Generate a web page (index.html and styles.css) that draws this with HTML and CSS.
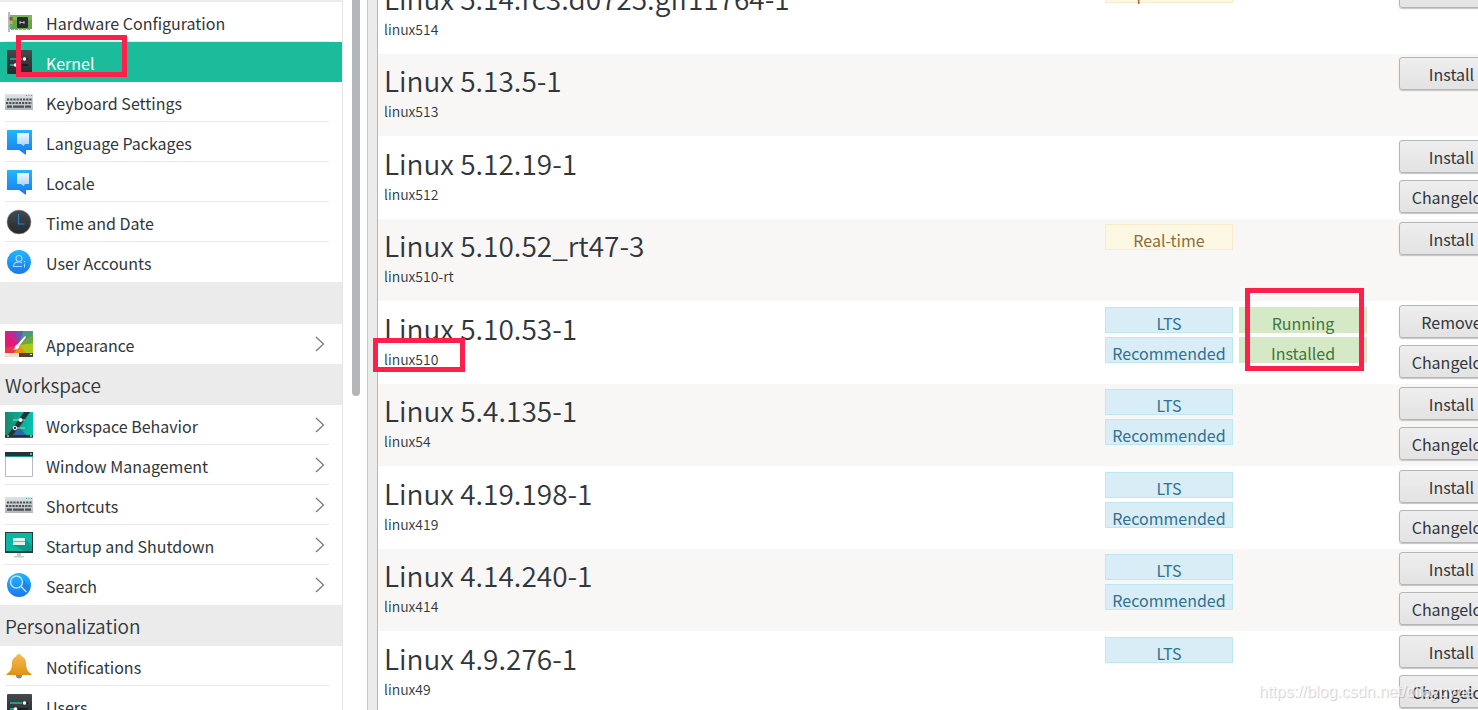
FILE: index.html
```html
<!DOCTYPE html>
<html lang="en">
<head>
  <meta charset="UTF-8">
  <meta name="viewport" content="width=device-width, initial-scale=1.0">
  <title>Kernel - Settings Manager</title>
  <link rel="stylesheet" href="styles.css">
</head>
<body>
  <!-- shared icons -->
  <svg class="defs" width="0" height="0">
    <defs>
      <linearGradient id="blue" x1="0" y1="0" x2="0" y2="1"><stop offset="0" stop-color="#1fb8fb"/><stop offset="1" stop-color="#1d77ef"/></linearGradient>
      <linearGradient id="dark" x1="0" y1="0" x2="0" y2="1"><stop offset="0" stop-color="#454a4e"/><stop offset="1" stop-color="#26292c"/></linearGradient>
      <linearGradient id="gold" x1="0" y1="0" x2="0" y2="1"><stop offset="0" stop-color="#f4bd54"/><stop offset="1" stop-color="#e29210"/></linearGradient>
      <linearGradient id="teal" x1="0" y1="0" x2="1" y2="0"><stop offset="0" stop-color="#168a6c"/><stop offset="1" stop-color="#05c3b2"/></linearGradient>
      <linearGradient id="pale" x1="0" y1="0" x2="0" y2="1"><stop offset="0" stop-color="#eef8ff"/><stop offset="1" stop-color="#a9d2fb"/></linearGradient>
      <linearGradient id="case" x1="0" y1="0" x2="0" y2="1"><stop offset="0" stop-color="#dfe3e5"/><stop offset="1" stop-color="#b3b9bd"/></linearGradient>
    </defs>
    <symbol id="sliders" viewBox="0 0 28 28">
      <rect x="2" y="2" width="25" height="24" rx="1" fill="url(#dark)"/>
      <path d="M5 11h12M5 17h6" stroke="#1abc9c" stroke-width="1.5"/>
      <path d="M17 11h6M11 17h12" stroke="#15181a" stroke-width="1.5"/>
      <circle cx="19.500" cy="11" r="1.800" fill="#fff"/><circle cx="10.500" cy="17" r="1.800" fill="#fff"/>
    </symbol>
    <symbol id="keyboard" viewBox="0 0 28 28">
      <rect x="0" y="6" width="28" height="16" fill="url(#case)"/>
      <path d="M21 7.500h6" stroke="#1abc9c" stroke-dasharray="1 1.500"/>
      <path d="M2 11.500h25M1 15h26" stroke="#4a5156" stroke-width="2.200" stroke-dasharray="2.200 1"/>
      <path d="M2 18.700h5M8 18.700h11M20 18.700h6" stroke="#4a5156" stroke-width="2.200"/>
    </symbol>
    <symbol id="bubble" viewBox="0 0 28 28">
      <path d="M2 2h25v20h-6v5l-7-5H2z" fill="url(#blue)"/>
      <path d="M12 5h12v11h-4l-1.500 2-2.500-2h-4z" fill="url(#pale)"/>
    </symbol>
    <symbol id="chevron" viewBox="0 0 10 16">
      <path d="M1 1l7.500 7L1 15" fill="none" stroke="#777b7e" stroke-width="1.300"/>
    </symbol>
  </svg>

  <div class="window">
    <nav class="sidebar">
      <ul class="group">
        <li><a class="item" href="#">
          <svg class="icon" viewBox="0 0 28 28">
            <rect x="4" y="7" width="23" height="14" fill="#68a347"/><rect x="4" y="7" width="23" height="5" fill="#7db65a"/>
            <rect x="3" y="4" width="2" height="20" fill="#b7bbbd"/>
            <path d="M6 9v3" stroke="#e5266d" stroke-width="3"/><path d="M6 13v3" stroke="#f2a71b" stroke-width="3"/><path d="M6 17v2" stroke="#2fb6e2" stroke-width="3"/>
            <rect x="12" y="9" width="11" height="11" rx="1" fill="#272c2f"/><path d="M15 13v3M15 14.500h4M19 13v3" stroke="#b8bfc2" fill="none"/>
            <path d="M6 21.500h19" stroke="#cda448" stroke-dasharray="3 1"/>
          </svg>
          <span class="label">Hardware Configuration</span></a></li>
        <li><a class="item active" href="#" aria-current="page"><svg class="icon"><use href="#sliders"/></svg><span class="label">Kernel</span></a></li>
        <li><a class="item" href="#"><svg class="icon"><use href="#keyboard"/></svg><span class="label">Keyboard Settings</span></a></li>
        <li><a class="item" href="#"><svg class="icon"><use href="#bubble"/></svg><span class="label">Language Packages</span></a></li>
        <li><a class="item" href="#"><svg class="icon"><use href="#bubble"/></svg><span class="label">Locale</span></a></li>
        <li><a class="item" href="#">
          <svg class="icon" viewBox="0 0 28 28"><circle cx="14" cy="14" r="12" fill="url(#dark)" stroke="#94979a" stroke-width=".6"/><path d="M13.500 6v10h6" fill="none" stroke="#2184c9" stroke-width="1.200"/></svg>
          <span class="label">Time and Date</span></a></li>
        <li><a class="item" href="#">
          <svg class="icon" viewBox="0 0 28 28"><circle cx="14" cy="14" r="12" fill="url(#blue)"/><g fill="none" stroke="#a5d8fc" stroke-width="1.100"><circle cx="14" cy="10.500" r="3"/><path d="M17 18.500H8.500c0-3 2-4.500 5.500-4.500 1.500 0 2.500.4 3 1"/><path d="M19.500 13v1.200M19.500 15.500v4"/></g></svg>
          <span class="label">User Accounts</span></a></li>
      </ul>

      <div class="spacer"></div>
      <ul class="group">
        <li><a class="item" href="#">
          <svg class="icon" viewBox="0 0 28 28">
            <rect y="1" width="28" height="26" fill="#e8452f"/>
            <path d="M14 15L0 1v17z" fill="#e6157f"/><path d="M14 15L0 1h10z" fill="#b92a9b"/><path d="M14 15L10 1h8z" fill="#6a54b4"/>
            <path d="M14 15L18 1h10v3z" fill="#4c9884"/><path d="M14 15L28 4v9z" fill="#66ad3d"/><path d="M14 15L28 13v10H18z" fill="#a9c916"/>
            <path d="M14 15L0 18v5h12z" fill="#ed3545"/><path d="M14 15l-5 8h12z" fill="#ee8b18"/>
            <path d="M0 23h14v4H0z" fill="#f7dccb"/><path d="M14 23h14v4H14z" fill="#4c4529"/><path d="M2 24.500h2M25 24.500h2" stroke="#fff"/>
            <path d="M20 6L12 15l2 1 7-8.500z" fill="#fff"/><path d="M12 14.500c-3 1-1 4-4 5 4 .5 6-1 6.500-3.500z" fill="#fff"/>
          </svg>
          <span class="label">Appearance</span><svg class="arrow"><use href="#chevron"/></svg></a></li>
      </ul>

      <h2 class="heading">Workspace</h2>
      <ul class="group">
        <li><a class="item" href="#">
          <svg class="icon" viewBox="0 0 28 28">
            <rect y="1" width="28" height="26" fill="url(#teal)"/>
            <path d="M19 1h6L8 25H2z" fill="#263136"/><path d="M8 24l6-8 7 8z" fill="#2868a5"/>
            <path d="M0 24h28v2.500H0z" fill="#26313a"/><path d="M2 25h2M25 25h2" stroke="#fff"/>
            <path d="M8 9h12M8 17h12" stroke="#9fd9d0"/><circle cx="15.500" cy="9" r="2" fill="#fff"/><circle cx="10" cy="17" r="1.800" fill="#334" stroke="#fff"/>
          </svg>
          <span class="label">Workspace Behavior</span><svg class="arrow"><use href="#chevron"/></svg></a></li>
        <li><a class="item" href="#">
          <svg class="icon" viewBox="0 0 28 28"><path d="M.5 3v22.500h27V3" fill="#fff" stroke="#b6bbbf"/><path d="M0 1h28v4H0z" fill="#263238"/><path d="M0 5.500h28" stroke="#1f9d86"/><path d="M25 3h2" stroke="#fff"/></svg>
          <span class="label">Window Management</span><svg class="arrow"><use href="#chevron"/></svg></a></li>
        <li><a class="item" href="#"><svg class="icon"><use href="#keyboard"/></svg><span class="label">Shortcuts</span><svg class="arrow"><use href="#chevron"/></svg></a></li>
        <li><a class="item" href="#">
          <svg class="icon" viewBox="0 0 28 28"><path d="M0 1h28v21H0z" fill="#263a40"/><path d="M1 2h26v18H1z" fill="#08b8a2"/><path d="M20 8l7 7v5h-8l-11-6z" fill="#079a89"/><path d="M8 7h12v7H8z" fill="#dff1ef"/><path d="M8 10.500h12" stroke="#76bcb4"/><path d="M12 22h4v3h3v1.500H9V25h3z" fill="#c8cccf"/></svg>
          <span class="label">Startup and Shutdown</span><svg class="arrow"><use href="#chevron"/></svg></a></li>
        <li><a class="item" href="#">
          <svg class="icon" viewBox="0 0 28 28"><circle cx="14" cy="14" r="12" fill="url(#blue)"/><path d="M17 7l8 9-4 7-5-6z" fill="#1d6fe3" opacity=".5"/><circle cx="11.500" cy="11" r="6" fill="none" stroke="#b5e2fd" stroke-width="1.500"/><path d="M16 15.500l5.500 5.500" stroke="#b5e2fd" stroke-width="1.500"/></svg>
          <span class="label">Search</span><svg class="arrow"><use href="#chevron"/></svg></a></li>
      </ul>

      <h2 class="heading">Personalization</h2>
      <ul class="group">
        <li><a class="item" href="#">
          <svg class="icon" viewBox="0 0 28 28"><circle cx="14" cy="23.500" r="3" fill="#878a8d"/><path d="M14 2c1.500 0 2.500 1 2.700 2.300C20 5.500 21 8 21 11c0 6 2 9 5.500 11v1h-25v-1C5 20 7 17 7 11c0-3 1-5.500 4.300-6.700C11.500 3 12.500 2 14 2z" fill="url(#gold)"/></svg>
          <span class="label">Notifications</span></a></li>
        <li><a class="item" href="#"><svg class="icon"><use href="#sliders"/></svg><span class="label">Users</span></a></li>
      </ul>
    </nav>
    <div class="scroll"><div class="thumb"></div></div>
    <div class="splitter"></div>

    <main class="content">
      <ul class="kernels">
        <li class="kernel">
          <div class="info"><h3>Linux 5.14.rc3.d0725.gff11764-1</h3><p>linux514</p></div>
          <div class="badges"><span class="badge warn">Experimental</span></div>
          <div class="badges"></div>
          <div class="buttons"><button>Install</button></div>
        </li>
        <li class="kernel">
          <div class="info"><h3>Linux 5.13.5-1</h3><p>linux513</p></div>
          <div class="badges"></div>
          <div class="badges"></div>
          <div class="buttons"><button>Install</button></div>
        </li>
        <li class="kernel">
          <div class="info"><h3>Linux 5.12.19-1</h3><p>linux512</p></div>
          <div class="badges"></div>
          <div class="badges"></div>
          <div class="buttons"><button>Install</button><button>Changelog</button></div>
        </li>
        <li class="kernel">
          <div class="info"><h3>Linux 5.10.52_rt47-3</h3><p>linux510-rt</p></div>
          <div class="badges"><span class="badge warn">Real-time</span></div>
          <div class="badges"></div>
          <div class="buttons"><button>Install</button></div>
        </li>
        <li class="kernel">
          <div class="info"><h3>Linux 5.10.53-1</h3><p>linux510</p></div>
          <div class="badges"><span class="badge">LTS</span><span class="badge">Recommended</span></div>
          <div class="badges"><span class="badge ok">Running</span><span class="badge ok">Installed</span></div>
          <div class="buttons"><button>Remove</button><button>Changelog</button></div>
        </li>
        <li class="kernel">
          <div class="info"><h3>Linux 5.4.135-1</h3><p>linux54</p></div>
          <div class="badges"><span class="badge">LTS</span><span class="badge">Recommended</span></div>
          <div class="badges"></div>
          <div class="buttons"><button>Install</button><button>Changelog</button></div>
        </li>
        <li class="kernel">
          <div class="info"><h3>Linux 4.19.198-1</h3><p>linux419</p></div>
          <div class="badges"><span class="badge">LTS</span><span class="badge">Recommended</span></div>
          <div class="badges"></div>
          <div class="buttons"><button>Install</button><button>Changelog</button></div>
        </li>
        <li class="kernel">
          <div class="info"><h3>Linux 4.14.240-1</h3><p>linux414</p></div>
          <div class="badges"><span class="badge">LTS</span><span class="badge">Recommended</span></div>
          <div class="badges"></div>
          <div class="buttons"><button>Install</button><button>Changelog</button></div>
        </li>
        <li class="kernel">
          <div class="info"><h3>Linux 4.9.276-1</h3><p>linux49</p></div>
          <div class="badges"><span class="badge">LTS</span></div>
          <div class="badges"></div>
          <div class="buttons"><button>Install</button><button>Changelog</button></div>
        </li>
      </ul>
    </main>
  </div>

  <!-- red marks over the window -->
  <div class="mark mark-menu"></div>
  <div class="mark mark-name"></div>
  <div class="mark mark-status"></div>
  <div class="watermark">https://blog.csdn.net/dliayuyue</div>
</body>
</html>
```
FILE: styles.css
```css
* {
  box-sizing: border-box;
}

body {
  margin: 0;
  height: 100vh;
  overflow: hidden;
  position: relative;
  font-family: "Noto Sans CJK SC", "Noto Sans", sans-serif;
  font-size: 16px;
  color: #31363b;
  background: #fff;
}

ul, h2, h3, p {
  margin: 0;
  padding: 0;
  list-style: none;
  font-weight: normal;
}

.defs {
  position: absolute;
}

.window {
  display: flex;
  height: 100%;
}

/* sidebar */
.sidebar {
  flex: 0 0 343px;
  overflow: hidden;
  border-right: 1px solid #e6e6e6;
  border-top: 2px solid #ebebeb;
}

.item {
  display: flex;
  align-items: center;
  gap: 13px;
  height: 40px;
  padding: 0 17px 0 5px;
  color: #31363b;
  text-decoration: none;
  background: linear-gradient(#e9e9e9, #e9e9e9) no-repeat 5px 100% / calc(100% - 18px) 1px;
}

.group li:last-child .item {
  background: none;
}

.item.active {
  background: #1abc9c;
  color: #fff;
}

.icon {
  flex: none;
  width: 28px;
  height: 28px;
}

.label {
  flex: 1;
  line-height: 24px;
  padding-top: 1px;
}

.arrow {
  width: 10px;
  height: 16px;
}

.spacer {
  height: 42px;
  background: #ebebeb;
}

.heading {
  height: 41px;
  padding-left: 5px;
  font-size: 19px;
  font-weight: 350;
  line-height: 41px;
  background: #ebebeb;
}

.scroll {
  flex: 0 0 24px;
  padding-left: 9px;
}

.thumb {
  width: 8px;
  height: 396px;
  border-radius: 0 0 4px 4px;
  background: #b5b6b8;
}

.splitter {
  flex: 0 0 11px;
  background: #ebebeb;
  border-left: 1px solid #c8c8c8;
  border-right: 1px solid #b8b8b8;
}

/* kernel list, scrolled a little and cut at the right edge */
.content {
  flex: 1;
  min-width: 0;
  overflow: hidden;
}

.kernels {
  margin: -29px -26px 0 0;
}

.kernel {
  display: grid;
  grid-template-columns: 1fr 128px 128px 131px;
  column-gap: 6px;
  height: 83px;
  padding: 4px 0 0 6px;
}

.kernel:nth-child(even) {
  height: 82px;
  padding-top: 3px;
  background: #f8f7f6;
}

.info h3 {
  font-size: 28px;
  font-weight: 350;
  line-height: 44px;
  padding-top: 1px;
}

.info p {
  font-size: 14px;
  font-weight: 350;
  line-height: 18px;
}

.badges {
  display: flex;
  flex-direction: column;
  gap: 4px;
  padding-top: 2px;
}

.badge {
  height: 26px;
  border: 1px solid #bce8f1;
  background: #d9edf7;
  color: #31708f;
  line-height: 30px;
  text-align: center;
}

.badge.warn {
  background: #fcf8e3;
  border-color: #faebcc;
  color: #8a6d3b;
}

.badge.ok {
  background: #d6e9c6;
  border-color: #d6e9c6;
  color: #3c763d;
}

.buttons {
  display: flex;
  flex-direction: column;
  gap: 7px;
  padding-left: 26px;
}

.buttons button {
  height: 33px;
  padding: 1px 0 0;
  font: inherit;
  line-height: 26px;
  color: #31363b;
  border: 1px solid #b4b5b6;
  border-radius: 3px;
  background: linear-gradient(#eeeeee, #e3e3e3);
  box-shadow: 0 1px 1px #c4c4c4;
}

/* overlays */
.mark {
  position: absolute;
  border: 5px solid #ff1f4b;
}

.mark-menu {
  left: 16px;
  top: 35px;
  width: 111px;
  height: 42px;
}

.mark-name {
  left: 373px;
  top: 338px;
  width: 92px;
  height: 34px;
}

.mark-status {
  right: 114px;
  top: 288px;
  width: 119px;
  height: 83px;
}

.watermark {
  position: absolute;
  right: 4px;
  bottom: 8px;
  font: 16px/20px "Liberation Sans", Arial, sans-serif;
  color: rgba(255, 255, 255, 0.7);
  text-shadow: 1px 1px 1px rgba(0, 0, 0, 0.2);
}
```
